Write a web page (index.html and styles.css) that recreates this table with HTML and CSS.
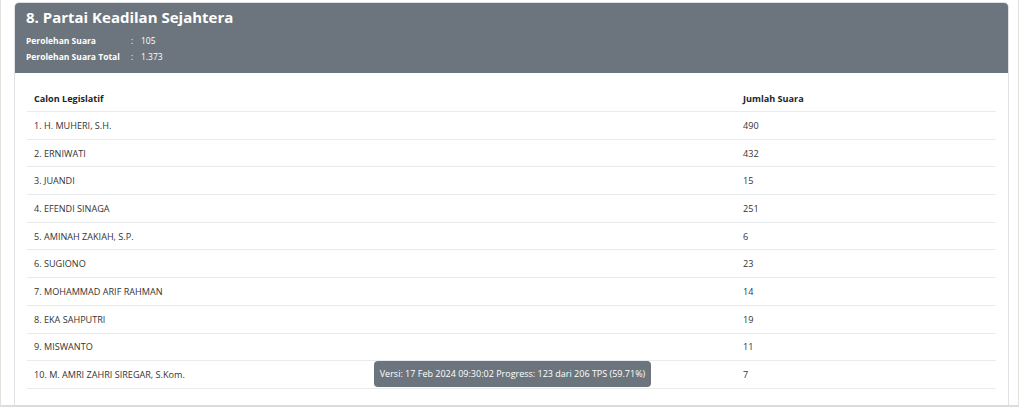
FILE: index.html
```html
<!DOCTYPE html>
<html>
<head>
<meta charset="utf-8">
<link rel="stylesheet" href="styles.css">
</head>
<body>
<div class="frame">
  <div class="card">
    <div class="card-head">
      <h2 class="title">8. Partai Keadilan Sejahtera</h2>
      <table class="summary">
        <tr><td class="lbl">Perolehan Suara</td><td class="colon">:</td><td>105</td></tr>
        <tr><td class="lbl">Perolehan Suara Total</td><td class="colon">:</td><td>1.373</td></tr>
      </table>
    </div>
    <div class="card-body">
      <table class="votes">
        <thead>
          <tr><th class="c1">Calon Legislatif</th><th>Jumlah Suara</th></tr>
        </thead>
        <tbody>
          <tr><td>1. H. MUHERI, S.H.</td><td>490</td></tr>
          <tr><td>2. ERNIWATI</td><td>432</td></tr>
          <tr><td>3. JUANDI</td><td>15</td></tr>
          <tr><td>4. EFENDI SINAGA</td><td>251</td></tr>
          <tr><td>5. AMINAH ZAKIAH, S.P.</td><td>6</td></tr>
          <tr><td>6. SUGIONO</td><td>23</td></tr>
          <tr><td>7. MOHAMMAD ARIF RAHMAN</td><td>14</td></tr>
          <tr><td>8. EKA SAHPUTRI</td><td>19</td></tr>
          <tr><td>9. MISWANTO</td><td>11</td></tr>
          <tr><td>10. M. AMRI ZAHRI SIREGAR, S.Kom.</td><td>7</td></tr>
        </tbody>
      </table>
    </div>
  </div>
  <div class="tooltip">Versi: 17 Feb 2024 09:30:02 Progress: 123 dari 206 TPS (59.71%)</div>
</div>
</body>
</html>
```
FILE: styles.css
```css
html, body {
  margin: 0;
  padding: 0;
  background: #fff;
}
body {
  font-family: "Open Sans", "Noto Sans", sans-serif;
  color: #212529;
}
.frame {
  position: relative;
  box-sizing: border-box;
  width: 1019px;
  height: 407px;
  border-left: 1px solid #e2e2e2;
  border-right: 1px solid #e2e2e2;
  border-bottom: 2px solid #dcdcdc;
  padding: 2px 0 0 13px;
  overflow: hidden;
}
.card {
  box-sizing: border-box;
  width: 995px;
  border: 1px solid #dee2e6;
  border-radius: 5px;
  overflow: hidden;
}
.card-head {
  background: #6c757d;
  color: #fff;
  padding: 5px 12px 8px;
  margin: -1px -1px 0;
  border-radius: 5px 5px 0 0;
}
.title {
  margin: 0 0 6px;
  font-size: 15px;
  font-weight: 700;
  line-height: 20px;
}
.summary {
  border-collapse: collapse;
  font-size: 8.5px;
  line-height: 16px;
}
.summary td {
  padding: 0;
}
.summary .lbl {
  font-weight: 700;
  width: 105px;
}
.summary .colon {
  width: 10px;
}
.card-body {
  padding: 12px 12px 24px;
}
.votes {
  width: 100%;
  border-collapse: collapse;
  font-size: 9.1px;
}
.votes th, .votes td {
  text-align: left;
  padding: 0 7px;
  height: 26.7px;
  border-bottom: 1px solid #e9ecef;
  color: #333;
}
.votes th {
  font-weight: 700;
  color: #212529;
  height: 26px;
}
.votes .c1 {
  width: 695px;
}
.tooltip {
  position: absolute;
  left: 373px;
  top: 361px;
  width: 277px;
  height: 26px;
  box-sizing: border-box;
  background: #6c757d;
  color: #fff;
  border-radius: 4px;
  font-size: 9px;
  line-height: 26px;
  text-align: center;
  white-space: nowrap;
}
```
